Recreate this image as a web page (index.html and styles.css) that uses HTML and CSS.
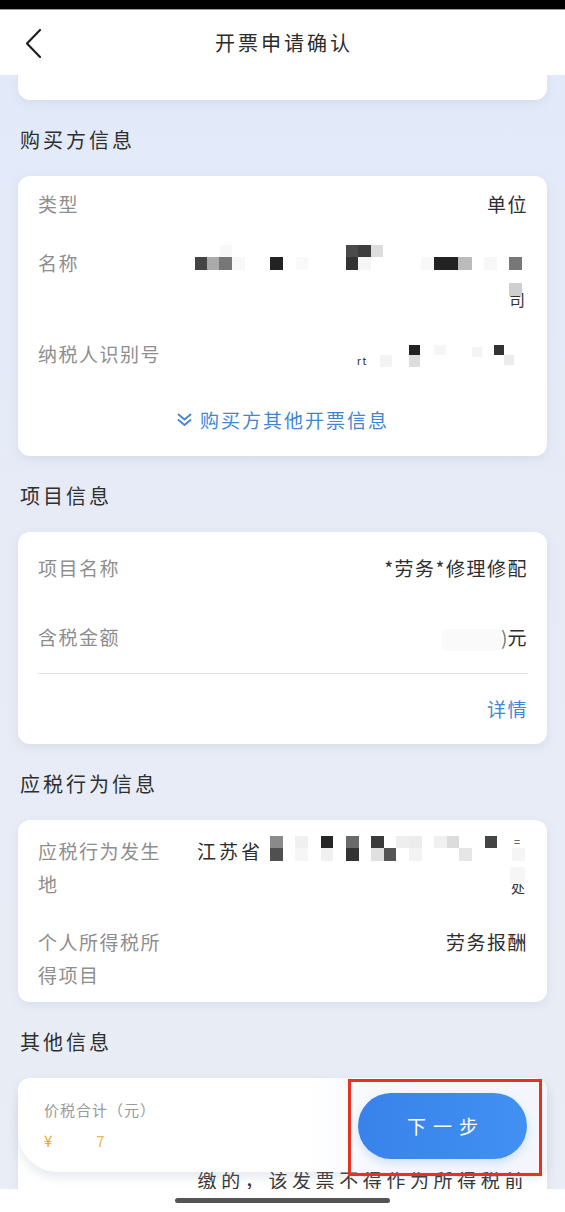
FILE: index.html
```html
<!DOCTYPE html>
<html lang="zh-CN">

<head>
    <meta charset="UTF-8">
    <meta name="viewport" content="width=device-width, initial-scale=1.0">
    <title>开票申请确认</title>
    <link rel="stylesheet" href="styles.css">
</head>

<body>
    <div class="status-bar"></div>

    <!-- Top navigation -->
    <header class="nav-bar">
        <a class="back-btn" href="#">
            <svg width="20" height="30" viewBox="0 0 20 30">
                <path d="M15 2 L2 15.5 L15 29" fill="none" stroke="#1f1f1f" stroke-width="2.2" stroke-linecap="round" stroke-linejoin="round"/>
            </svg>
        </a>
        <h1 class="nav-title">开票申请确认</h1>
    </header>

    <main class="content">
        <div class="card card-top"></div>

        <!-- Buyer -->
        <h2 class="section-title">购买方信息</h2>
        <div class="card card-buyer">
            <div class="row">
                <span class="label">类型</span>
                <span class="value">单位</span>
            </div>
            <div class="row row-name">
                <span class="label">名称</span>
                <div class="value">
                    <svg class="mosaic mosaic-name" width="340" height="70" viewBox="0 0 340 70">
                        <text x="321" y="66" font-size="16" fill="#333" font-family="Noto Sans CJK SC">司</text>
                        <rect x="7" y="17" width="12" height="13" fill="#444"/>
                        <rect x="19" y="17" width="12" height="13" fill="#aaa"/>
                        <rect x="31" y="17" width="13" height="13" fill="#777"/>
                        <rect x="44" y="17" width="13" height="13" fill="#f7f7f7"/>
                        <rect x="32" y="5" width="12" height="12" fill="#f8f8f8"/>
                        <rect x="82" y="17" width="13" height="13" fill="#222"/>
                        <rect x="108" y="17" width="12" height="13" fill="#f9f9f9"/>
                        <rect x="158" y="5" width="12" height="12" fill="#4a4a4a"/>
                        <rect x="158" y="17" width="12" height="13" fill="#333"/>
                        <rect x="170" y="5" width="13" height="12" fill="#3d3d3d"/>
                        <rect x="170" y="17" width="13" height="13" fill="#f6f6f6"/>
                        <rect x="183" y="5" width="12" height="12" fill="#ddd"/>
                        <rect x="233" y="17" width="13" height="13" fill="#f8f8f8"/>
                        <rect x="246" y="17" width="24" height="13" fill="#222"/>
                        <rect x="270" y="17" width="14" height="13" fill="#bbb"/>
                        <rect x="296" y="17" width="13" height="13" fill="#f7f7f7"/>
                        <rect x="321" y="17" width="13" height="13" fill="#777"/>
                        <rect x="321" y="43" width="13" height="13" fill="#cfcfcf"/>
                    </svg>
                </div>
            </div>
            <div class="row row-tax">
                <span class="label">纳税人识别号</span>
                <div class="value">
                    <svg class="mosaic" width="340" height="28" viewBox="0 0 340 28">
                        <text x="169" y="25" font-size="10" fill="#222" font-family="Noto Sans CJK SC">rt</text>
                        <rect x="192" y="15" width="12" height="12" fill="#f3f3f3"/>
                        <rect x="221" y="5" width="11" height="10" fill="#222"/>
                        <rect x="221" y="15" width="11" height="12" fill="#ddd"/>
                        <rect x="246" y="5" width="12" height="10" fill="#f6f6f6"/>
                        <rect x="284" y="7" width="10" height="10" fill="#f4f4f4"/>
                        <rect x="306" y="5" width="10" height="10" fill="#333"/>
                        <rect x="316" y="15" width="10" height="10" fill="#ebebeb"/>
                    </svg>
                </div>
            </div>
            <a class="more-link" href="#">
                <svg width="15" height="14" viewBox="0 0 15 14">
                    <path d="M1.5 1.5 L7.5 6.5 L13.5 1.5 M1.5 7 L7.5 12 L13.5 7" fill="none" stroke="#3f86cf" stroke-width="1.8" stroke-linecap="round" stroke-linejoin="round"/>
                </svg>
                购买方其他开票信息
            </a>
        </div>

        <!-- Project -->
        <h2 class="section-title">项目信息</h2>
        <div class="card card-project">
            <div class="row">
                <span class="label">项目名称</span>
                <span class="value">*劳务*修理修配</span>
            </div>
            <div class="row row-amount">
                <span class="label">含税金额</span>
                <span class="value"><span class="blur-box"></span><span class="cut-digit">)</span>元</span>
            </div>
            <div class="divider"></div>
            <a class="detail-link" href="#">详情</a>
        </div>

        <!-- Taxable behaviour -->
        <h2 class="section-title">应税行为信息</h2>
        <div class="card card-behaviour">
            <div class="row tall">
                <span class="label">应税行为发生地</span>
                <div class="value place">
                    <div class="place-line">
                        <span>江苏省</span>
                        <svg class="mosaic" width="263" height="33" viewBox="0 0 263 33">
                            <text x="249" y="12" font-size="11" fill="#444" font-family="Noto Sans CJK SC">=</text>
                            <rect x="5" y="2" width="13" height="12" fill="#8a8a8a"/>
                            <rect x="5" y="14" width="13" height="13" fill="#505050"/>
                            <rect x="30" y="2" width="13" height="12" fill="#f0f0f0"/>
                            <rect x="30" y="14" width="13" height="13" fill="#f6f6f6"/>
                            <rect x="56" y="2" width="12" height="12" fill="#262626"/>
                            <rect x="56" y="14" width="12" height="13" fill="#f0f0f0"/>
                            <rect x="81" y="2" width="13" height="12" fill="#6a6a6a"/>
                            <rect x="81" y="14" width="13" height="13" fill="#333"/>
                            <rect x="106" y="2" width="13" height="12" fill="#3a3a3a"/>
                            <rect x="106" y="14" width="13" height="13" fill="#e0e0e0"/>
                            <rect x="119" y="14" width="12" height="13" fill="#555"/>
                            <rect x="131" y="2" width="13" height="12" fill="#eee"/>
                            <rect x="144" y="2" width="13" height="12" fill="#ececec"/>
                            <rect x="144" y="14" width="13" height="13" fill="#f3f3f3"/>
                            <rect x="169" y="2" width="13" height="12" fill="#f0f0f0"/>
                            <rect x="182" y="2" width="12" height="12" fill="#dcdcdc"/>
                            <rect x="194" y="14" width="13" height="13" fill="#e6e6e6"/>
                            <rect x="220" y="2" width="12" height="12" fill="#444"/>
                            <rect x="247" y="14" width="13" height="13" fill="#f5f5f5"/>
                        </svg>
                    </div>
                    <div class="place-line end">
                        <svg class="mosaic" width="20" height="33" viewBox="0 0 20 33">
                            <text x="3" y="26" font-size="14" fill="#333" font-family="Noto Sans CJK SC">处</text>
                            <rect x="2" y="0" width="15" height="17" fill="#f6f6f6"/>
                        </svg>
                    </div>
                </div>
            </div>
            <div class="row tall row-income">
                <span class="label">个人所得税所得项目</span>
                <span class="value">劳务报酬</span>
            </div>
        </div>

        <!-- Others -->
        <h2 class="section-title">其他信息</h2>
        <div class="card card-other">
            <p class="note">缴的，该发票不得作为所得税前</p>
        </div>
    </main>

    <!-- Floating total bar -->
    <div class="total-bar">
        <div class="total-info">
            <div class="total-label">价税合计（元）</div>
            <div class="total-amount">¥<span class="amount-hidden"></span><span class="amount-tail">7</span></div>
        </div>
        <button class="next-btn" type="button">下一步</button>
        <div class="mark-box"></div>
    </div>

    <div class="home-strip">
        <div class="home-indicator"></div>
    </div>
</body>

</html>
```

FILE: styles.css
```css
/* Reset */
* {
    margin: 0;
    padding: 0;
    box-sizing: border-box;
}

body {
    position: relative;
    width: 565px;
    height: 1212px;
    overflow: hidden;
    font-family: "Noto Sans CJK SC", "Noto Sans", sans-serif;
    background: linear-gradient(180deg, #e2e9f9 0%, #e6ebf6 45%, #e9edf5 100%);
    color: #2e2e2e;
}

a {
    text-decoration: none;
}

/* Status + navigation */
.status-bar {
    height: 10px;
    background: #000;
    border-bottom: 1px solid #9a9a9a;
}

.nav-bar {
    position: relative;
    height: 65px;
    background: #fff;
    display: flex;
    align-items: center;
    justify-content: center;
}

.back-btn {
    position: absolute;
    left: 25px;
    top: 18px;
    display: block;
    width: 20px;
    height: 30px;
}

.nav-title {
    font-size: 20px;
    font-weight: normal;
    letter-spacing: 3px;
    color: #2b2b2b;
    line-height: 65px;
    padding-left: 3px;
}

/* Content */
.content {
    padding: 0 18px;
}

.card {
    background: #fff;
    border-radius: 12px;
    box-shadow: 0 3px 8px rgba(170, 182, 205, 0.25);
}

.card-top {
    height: 25px;
    border-radius: 0 0 12px 12px;
}

.section-title {
    padding: 27px 0 23px 2px;
    font-size: 20px;
    font-weight: normal;
    line-height: 26px;
    letter-spacing: 3px;
    color: #2f2f2f;
}

.row {
    display: flex;
    justify-content: space-between;
    align-items: flex-start;
}

.label {
    width: 128px;
    flex-shrink: 0;
    font-size: 19px;
    line-height: 28px;
    letter-spacing: 1.5px;
    color: #8e8e8e;
}

.value {
    flex: 1;
    text-align: right;
    font-size: 19px;
    line-height: 28px;
    letter-spacing: 1.5px;
    color: #2e2e2e;
}

.mosaic {
    display: block;
    flex-shrink: 0;
    margin-left: auto;
}

/* Buyer card */
.card-buyer {
    padding: 14px 19px 22px 20px;
}

.row-name {
    margin-top: 31px;
}

.mosaic-name {
    margin-top: -9px;
    margin-bottom: -1px;
}

.row-tax {
    margin-top: 31px;
}

.more-link {
    margin-top: 38px;
    display: flex;
    align-items: center;
    justify-content: center;
    gap: 8px;
    font-size: 19px;
    line-height: 28px;
    letter-spacing: 2px;
    color: #3f86cf;
}

/* Project card */
.card-project {
    padding: 22px 19px 21px 20px;
}

.row-amount {
    margin-top: 41px;
}

.blur-box {
    display: inline-block;
    width: 60px;
    height: 22px;
    vertical-align: middle;
    background: #fafafa;
    border-radius: 6px;
}

.cut-digit {
    letter-spacing: 0;
    color: #777;
}

.divider {
    margin-top: 22px;
    height: 1px;
    background: #e1e1e1;
}

.detail-link {
    display: block;
    margin-top: 21px;
    text-align: right;
    font-size: 19px;
    line-height: 28px;
    letter-spacing: 1.5px;
    color: #3f86cf;
}

/* Behaviour card */
.card-behaviour {
    padding: 14px 19px 11px 20px;
}

.row.tall .label,
.row.tall .value {
    line-height: 33px;
}

.place-line {
    display: flex;
    align-items: center;
    height: 33px;
    padding-left: 31px;
}

.place-line span {
    flex-shrink: 0;
    letter-spacing: 3px;
}

.place-line.end {
    justify-content: flex-end;
}

.row-income {
    margin-top: 25px;
}

/* Other card */
.card-other {
    height: 160px;
    padding: 85px 19px 0 20px;
}

.note {
    text-align: right;
    font-size: 19px;
    line-height: 33px;
    letter-spacing: 4.6px;
    color: #333;
}

/* Floating total bar */
.total-bar {
    position: absolute;
    left: 18px;
    top: 1079px;
    width: 529px;
    height: 93px;
    display: flex;
    align-items: center;
    justify-content: space-between;
    padding: 0 20px 0 26px;
    border-radius: 30px 12px 12px 40px;
    background: linear-gradient(90deg, #ffffff 0%, #ffffff 55%, rgba(246, 248, 252, 0.97) 68%, rgba(242, 246, 252, 0.95) 100%);
    box-shadow: 0 6px 10px rgba(150, 162, 185, 0.22);
}

.total-info {
    align-self: flex-start;
    padding-top: 20px;
}

.total-label {
    font-size: 15px;
    line-height: 22px;
    letter-spacing: 1px;
    color: #9a9a9a;
}

.total-amount {
    margin-top: 9px;
    font-size: 15px;
    line-height: 22px;
    color: #f0a12c;
}

.amount-hidden {
    display: inline-block;
    width: 44px;
}

.amount-tail {
    opacity: 0.8;
}

.next-btn {
    width: 169px;
    height: 66px;
    border: none;
    border-radius: 33px;
    background: linear-gradient(90deg, #3883ea, #4190f2);
    color: #fff;
    font-family: "Noto Sans CJK SC", sans-serif;
    font-size: 19px;
    letter-spacing: 7px;
    padding-left: 7px;
    box-shadow: 0 4px 10px rgba(64, 134, 230, 0.2);
}

.mark-box {
    position: absolute;
    left: 330px;
    top: 0;
    width: 194px;
    height: 97px;
    border: 3px solid #e8321f;
}

/* Home indicator */
.home-strip {
    position: absolute;
    left: 0;
    bottom: 0;
    width: 100%;
    height: 23px;
    background: #fff;
}

.home-indicator {
    width: 215px;
    height: 5px;
    margin: 9px auto 0;
    border-radius: 3px;
    background: #555;
}
```
